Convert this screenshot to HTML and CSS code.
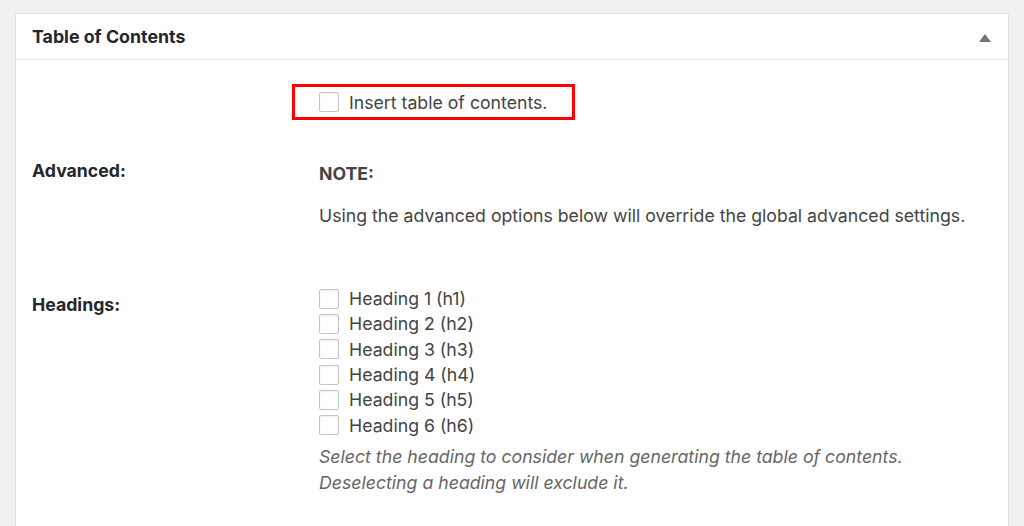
FILE: index.html
```html
<!DOCTYPE html>
<html lang="en">
  <head>
    <meta charset="UTF-8" />
    <title>Table of Contents</title>
    <link rel="stylesheet" href="styles.css">
  </head>
  <body>
    <div class="postbox">
      <div class="postbox-header">
        <h2 class="postbox-title">Table of Contents</h2>
        <span class="toggle-indicator"></span>
      </div>

      <div class="inside">
        <div class="row row-insert">
          <div class="row-label"></div>
          <div class="row-field">
            <label class="highlight">
              <span class="checkbox"></span>
              Insert table of contents.
            </label>
          </div>
        </div>

        <div class="row row-advanced">
          <div class="row-label">Advanced:</div>
          <div class="row-field">
            <p class="note-title">NOTE:</p>
            <p class="note-text">Using the advanced options below will override the global advanced settings.</p>
          </div>
        </div>

        <div class="row row-headings">
          <div class="row-label">Headings:</div>
          <div class="row-field">
            <ul class="check-list">
              <li><span class="checkbox"></span>Heading 1 (h1)</li>
              <li><span class="checkbox"></span>Heading 2 (h2)</li>
              <li><span class="checkbox"></span>Heading 3 (h3)</li>
              <li><span class="checkbox"></span>Heading 4 (h4)</li>
              <li><span class="checkbox"></span>Heading 5 (h5)</li>
              <li><span class="checkbox"></span>Heading 6 (h6)</li>
            </ul>
            <p class="description">Select the heading to consider when generating the table of contents.<br>Deselecting a heading will exclude it.</p>
          </div>
        </div>
      </div>
    </div>
  </body>
</html>
```

FILE: styles.css
```css
* {
  margin: 0;
  padding: 0;
  box-sizing: border-box;
}

html {
  overflow: hidden;
}

body {
  font-family: Inter, "Liberation Sans", sans-serif;
  font-size: 17.7px;
  color: #444;
  background-color: #f1f1f1;
  padding: 13px 15px 0 15px;
  height: 526px;
  overflow: hidden;
}

.postbox {
  background-color: #fff;
  border: 1px solid #e2e4e7;
  border-bottom: none;
  width: 994px;
  height: 513px;
}

.postbox-header {
  display: flex;
  align-items: center;
  justify-content: space-between;
  height: 46px;
  padding: 0 17px 0 16px;
  border-bottom: 1px solid #e8e8e8;
}

.postbox-title {
  font-size: 17.8px;
  font-weight: 650;
  color: #23282d;
}

.toggle-indicator {
  width: 0;
  height: 0;
  border-left: 6px solid transparent;
  border-right: 6px solid transparent;
  border-bottom: 8px solid #72777c;
  margin-top: 2px;
}

.inside {
  padding: 0 16px;
}

.row {
  display: flex;
}

.row-label {
  width: 287px;
  flex-shrink: 0;
  font-weight: 650;
  color: #23282d;
}

.row-insert {
  padding-top: 24px;
}

.highlight {
  display: inline-flex;
  align-items: center;
  gap: 10px;
  margin-left: -27px;
  padding: 0 25px 0 24px;
  height: 36px;
  border: 3px solid #f00;
}

.checkbox {
  display: inline-block;
  width: 20px;
  height: 20px;
  border: 1px solid #c3c4c7;
  border-radius: 2px;
  background-color: #fff;
  box-shadow: inset 0 1px 2px rgba(0, 0, 0, 0.07);
  flex-shrink: 0;
}

.row-advanced {
  padding-top: 40px;
}

.note-title {
  font-weight: 650;
  padding-top: 3px;
}

.note-text {
  margin-top: 21px;
}

.row-headings {
  padding-top: 65px;
}

.row-headings .row-label {
  padding-top: 3px;
}

.check-list {
  list-style: none;
  margin-top: -5px;
}

.check-list li {
  display: flex;
  align-items: center;
  gap: 10px;
  height: 25.3px;
}

.description {
  font-style: italic;
  color: #666;
  line-height: 26px;
  margin-top: 6px;
}
```
